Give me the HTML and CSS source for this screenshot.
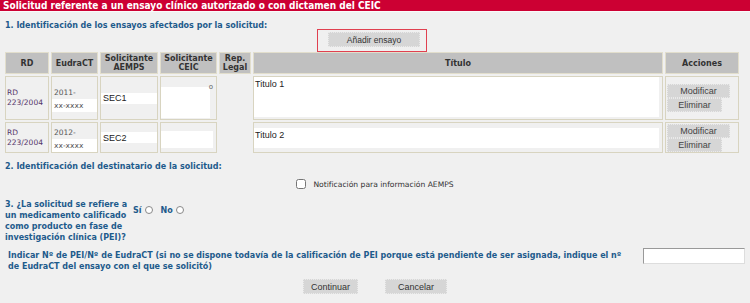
FILE: index.html
```html
<!DOCTYPE html>
<html lang="es">
<head>
    <meta charset="UTF-8">
    <title>Solicitud referente a un ensayo clínico</title>
    <link rel="stylesheet" href="styles.css">
</head>
<body>

<div class="titlebar">Solicitud referente a un ensayo clínico autorizado o con dictamen del CEIC</div>

<div class="content">
    <h2 class="section">1. Identificación de los ensayos afectados por la solicitud:</h2>

    <div class="add-row">
        <div class="add-box"><button type="button" class="btn btn-add">Añadir ensayo</button></div>
    </div>

    <table class="ensayos">
        <colgroup>
            <col style="width:44px">
            <col style="width:47px">
            <col style="width:58px">
            <col style="width:57px">
            <col style="width:32px">
            <col>
            <col style="width:74px">
        </colgroup>
        <thead>
            <tr>
                <th>RD</th>
                <th>EudraCT</th>
                <th>Solicitante AEMPS</th>
                <th>Solicitante CEIC</th>
                <th>Rep. Legal</th>
                <th>Título</th>
                <th>Acciones</th>
            </tr>
        </thead>
        <tbody>
            <tr class="row-1">
                <td class="rd">RD 223/2004</td>
                <td class="eudract">2011-<span class="eudract-num">xx-xxxx</span></td>
                <td><input type="text" class="field-sol" value="SEC1"></td>
                <td class="ceic"><div class="ceic-box"></div><span class="ceic-mark">o</span></td>
                <td class="rep"></td>
                <td class="titulo"><div class="titulo-box tall">Titulo 1</div></td>
                <td class="acciones">
                    <button type="button" class="btn btn-mod">Modificar</button>
                    <button type="button" class="btn btn-del">Eliminar</button>
                </td>
            </tr>
            <tr class="row-2">
                <td class="rd">RD 223/2004</td>
                <td class="eudract">2012-<span class="eudract-num">xx-xxxx</span></td>
                <td><input type="text" class="field-sol" value="SEC2"></td>
                <td class="ceic"><div class="ceic-box short"></div></td>
                <td class="rep"></td>
                <td class="titulo"><div class="titulo-box">Titulo 2</div></td>
                <td class="acciones">
                    <button type="button" class="btn btn-mod">Modificar</button>
                    <button type="button" class="btn btn-del">Eliminar</button>
                </td>
            </tr>
        </tbody>
    </table>

    <h2 class="section section-2">2. Identificación del destinatario de la solicitud:</h2>

    <div class="notif-row">
        <label class="notif"><input type="checkbox" class="check"> Notificación para información AEMPS</label>
    </div>

    <div class="pei-row">
        <div class="pei-question">3. ¿La solicitud se refiere a un medicamento calificado como producto en fase de investigación clínica (PEI)?</div>
        <div class="pei-options">
            <span>Sí</span><span class="radio"></span>
            <span>No</span><span class="radio"></span>
        </div>
    </div>

    <div class="indicar-row">
        <div class="indicar-text">Indicar Nº de PEI/Nº de EudraCT (si no se dispone todavía de la calificación de PEI porque está pendiente de ser asignada, indique el nº de EudraCT del ensayo con el que se solicitó)</div>
        <input type="text" class="indicar-input">
    </div>

    <div class="actions">
        <button type="button" class="btn btn-main">Continuar</button>
        <button type="button" class="btn btn-main btn-cancel">Cancelar</button>
    </div>
</div>

</body>
</html>
```

FILE: styles.css
```css
body {
    margin: 0;
    background-color: #f0f0f0;
    font-family: "DejaVu Sans", Verdana, sans-serif;
    font-size: 8px;
    color: #333;
}
.titlebar {
    background-color: #cc0033;
    color: white;
    font-family: "DejaVu Sans Condensed", "DejaVu Sans", sans-serif;
    font-weight: bold;
    font-size: 10px;
    height: 11px;
    line-height: 11px;
    padding-left: 3px;
    border-bottom: 1px solid #fafafa;
    white-space: nowrap;
    overflow: hidden;
}
.content {
    padding: 0 4px;
}
.section {
    color: #1e5b8c;
    font-size: 8px;
    font-weight: bold;
    margin: 0;
    padding: 9px 0 0 1px;
    line-height: 10px;
}
.add-row {
    display: flex;
    justify-content: center;
    margin-top: -2px;
    padding-right: 6px;
}
.add-box {
    border: 1px solid #e04050;
    padding: 2px 6px 2px 10px;
    height: 17px;
}
.btn {
    font-family: "Liberation Sans", Arial, sans-serif;
    background-color: #d6d6d6;
    border: 1px dotted #eaeaea;
    color: #333;
    padding: 0;
    cursor: pointer;
}
.btn-add {
    width: 92px;
    height: 15px;
    font-size: 8.5px;
}
.ensayos {
    width: 738px;
    table-layout: fixed;
    border-collapse: separate;
    border-spacing: 2px;
    margin-left: -1px;
    margin-top: -2px;
}
.ensayos th {
    background-color: #c0c0c0;
    border: 1px solid #e2decc;
    font-size: 8px;
    color: #333;
    height: 20px;
    padding: 0;
    line-height: 9px;
}
.ensayos td {
    border: 1px solid #d8d4c0;
    padding: 0;
    vertical-align: middle;
    font-size: 8px;
}
.ensayos td.rep {
    border-color: #f0f0f0;
}
.row-1 td {
    height: 40px;
}
.row-2 td {
    height: 27px;
}
.rd {
    color: #55366a;
    font-size: 7.5px !important;
    line-height: 10px;
    padding-left: 1px !important;
}
.eudract {
    color: #555;
    font-size: 7.5px !important;
    line-height: 13px;
    padding-left: 2px !important;
    padding-top: 2px !important;
}
.eudract-num {
    display: block;
    background: white;
    margin-left: -2px;
    padding-left: 2px;
}
.field-sol {
    display: block;
    width: 52px;
    height: 11px;
    border: none;
    background: white;
    font-family: "Liberation Sans", Arial, sans-serif;
    font-size: 9px;
    padding: 0 2px;
    color: #222;
}
.ceic {
    position: relative;
    vertical-align: bottom !important;
}
.ceic-box {
    width: 49px;
    height: 31px;
    background: white;
    margin-bottom: 1px;
}
.ceic-box.short {
    width: 52px;
    height: 17px;
    margin-bottom: 4px;
}
.ceic-mark {
    position: absolute;
    right: 3px;
    top: 6px;
    font-size: 7px;
    color: #666;
}
.titulo {
    vertical-align: top !important;
}
.titulo-box {
    background: white;
    font-family: "Liberation Sans", Arial, sans-serif;
    font-size: 9px;
    color: #222;
    height: 20px;
    margin: 5px 3px 0 0;
    padding: 2px 1px;
    box-sizing: border-box;
}
.titulo-box.tall {
    height: 40px;
    margin-top: 0;
}
.acciones {
    padding-left: 1px !important;
}
.btn-mod, .btn-del {
    display: block;
    font-size: 9px;
    height: 14px;
    color: #444;
}
.btn-mod {
    width: 63px;
}
.btn-del {
    width: 55px;
}
.section-2 {
    padding-top: 7px;
}
.notif-row {
    display: flex;
    justify-content: center;
    margin-top: 7px;
}
.notif {
    display: flex;
    align-items: center;
    gap: 4px;
    color: #333;
    font-size: 7.6px;
}
.check {
    margin: 0 3px 0 0;
    width: 10px;
    height: 10px;
}
.pei-row {
    display: flex;
    margin-top: 10px;
    padding-left: 1px;
}
.pei-question {
    width: 125px;
    color: #1e5b8c;
    font-weight: bold;
    line-height: 11px;
}
.pei-options {
    display: flex;
    align-items: center;
    gap: 3px;
    color: #1e5b8c;
    font-weight: bold;
    height: 10px;
    margin-top: 6px;
    margin-left: 3px;
}
.radio {
    width: 6px;
    height: 6px;
    border: 1px solid #888;
    border-radius: 50%;
    background: white;
    margin-right: 5px;
}
.indicar-row {
    display: flex;
    align-items: flex-start;
    margin-top: 3px;
    padding-left: 4px;
}
.indicar-text {
    width: 626px;
    color: #1e5b8c;
    font-weight: bold;
    line-height: 11px;
    margin-top: 4px;
}
.indicar-input {
    width: 100px;
    height: 14px;
    margin-left: 9px;
    margin-top: 2px;
    border: 1px solid #999;
    border-right-color: #ddd;
    border-bottom-color: #ddd;
    background: white;
    padding: 0;
}
.actions {
    display: flex;
    justify-content: center;
    gap: 27px;
    margin-top: 7px;
}
.btn-main {
    width: 55px;
    height: 15px;
    font-size: 9px;
}
.btn-cancel {
    width: 62px;
}
```
